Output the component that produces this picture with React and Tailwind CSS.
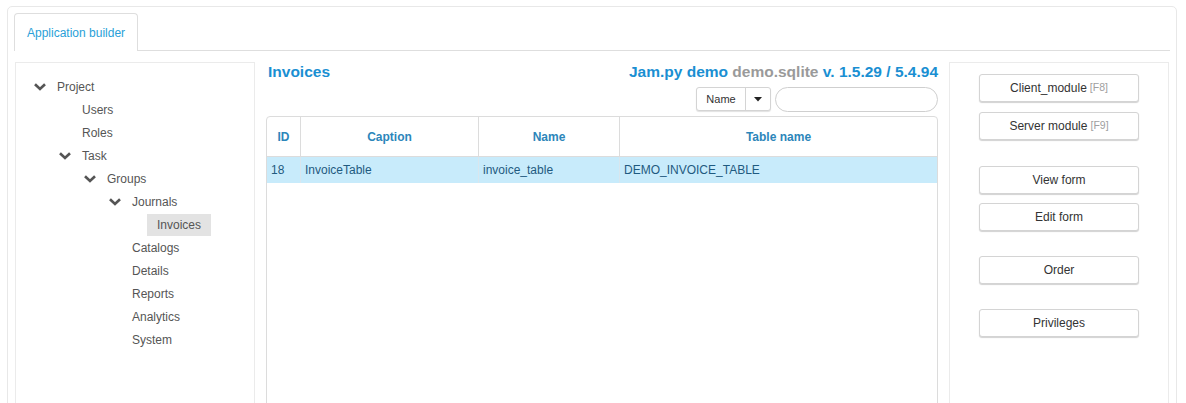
import React from "react";

const FONT = { fontFamily: '"Liberation Sans", Arial, Helvetica, sans-serif' };

function Chevron() {
  return (
    <svg width="12" height="8" viewBox="0 0 12 8" className="block">
      <path d="M1 1.2 L6 6 L11 1.2" fill="none" stroke="#555" strokeWidth="2.6" strokeLinejoin="miter" />
    </svg>
  );
}

const tree = [
  { label: "Project", level: 0, open: true },
  { label: "Users", level: 1 },
  { label: "Roles", level: 1 },
  { label: "Task", level: 1, open: true },
  { label: "Groups", level: 2, open: true },
  { label: "Journals", level: 3, open: true },
  { label: "Invoices", level: 4, selected: true },
  { label: "Catalogs", level: 3 },
  { label: "Details", level: 3 },
  { label: "Reports", level: 3 },
  { label: "Analytics", level: 3 },
  { label: "System", level: 3 },
];

const indents = ["pl-[18px]", "pl-[43px]", "pl-[68px]", "pl-[93px]", "pl-[118px]"];

function Btn({ children, hint, className = "" }) {
  return (
    <div
      className={
        "w-[160px] h-[28px] flex items-center justify-center rounded-[3px] border border-[#d4d4d4] bg-white text-[12px] text-[#333] shadow-[0_1px_1px_rgba(0,0,0,0.18)] " +
        className
      }
    >
      <span>{children}</span>
      {hint && <span className="ml-[3px] text-[10.5px] text-[#a0a0a0]">{hint}</span>}
    </div>
  );
}

export default function App() {
  return (
    <div className="w-[1186px] h-[403px] overflow-hidden bg-white" style={FONT}>
      <div className="ml-[7px] mt-[6px] w-[1170px] h-[420px] rounded-[5px] border border-[#e8e8e8] px-[6px] pt-[6px]">
        {/* tab bar */}
        <div className="flex border-b border-[#dedede] h-[38px]">
          <div className="w-[124px] h-[38px] rounded-t-[4px] border border-b-0 border-[#dedede] bg-white flex items-center pl-[12px] text-[12px] text-[#2a9fd8]">
            Application builder
          </div>
        </div>

        {/* content */}
        <div className="flex items-start mt-[11px] ml-px">
          {/* left tree panel */}
          <div className="w-[240px] h-[360px] border border-[#ebebeb] pt-[12px]">
            {tree.map((t) => (
              <div key={t.label} className={"h-[23px] flex items-center " + indents[t.level]}>
                <div className="w-[13px] flex justify-start">{t.open && <Chevron />}</div>
                <span
                  className={
                    "h-[22px] leading-[22px] px-[10px] text-[12px] text-[#555] " +
                    (t.selected ? "bg-[#e3e3e3]" : "")
                  }
                >
                  {t.label}
                </span>
              </div>
            ))}
          </div>

          {/* center */}
          <div className="w-[672px] ml-[11px]">
            <div className="h-[20px] flex items-center justify-between">
              <span className="text-[15.5px] font-bold text-[#1a8fd2] pl-[2px]">Invoices</span>
              <span className="text-[15.5px] font-bold text-[#1a8fd2]">
                Jam.py demo <span className="text-[#9a9a9a]">demo.sqlite</span> v. 1.5.29 / 5.4.94
              </span>
            </div>
            <div className="flex justify-end mt-[5px] h-[24px]">
              <div className="flex h-[24px] rounded-[3px] border border-[#d4d4d4] shadow-[0_1px_1px_rgba(0,0,0,0.12)] bg-white">
                <div className="w-[49px] flex items-center justify-center text-[11px] text-[#333] border-r border-[#d4d4d4]">
                  Name
                </div>
                <div className="w-[24px] flex items-center justify-center">
                  <svg width="8" height="5" viewBox="0 0 8 5">
                    <path d="M0 0 H8 L4 4.5 Z" fill="#222" />
                  </svg>
                </div>
              </div>
              <div className="ml-[4px] w-[163px] h-[25px] rounded-full border border-[#cfcfcf] bg-white" />
            </div>
            <div className="mt-[5px] h-[300px] rounded-t-[4px] border border-[#dcdcdc] overflow-hidden">
              <div className="flex h-[40px] border-b border-[#dcdcdc] text-[12px] font-bold text-[#2c86ba]">
                <div className="w-[34px] flex items-center justify-center border-r border-[#dcdcdc]">ID</div>
                <div className="w-[178px] flex items-center justify-center border-r border-[#dcdcdc]">Caption</div>
                <div className="w-[141px] flex items-center justify-center border-r border-[#dcdcdc]">Name</div>
                <div className="flex-1 flex items-center justify-center">Table name</div>
              </div>
              <div className="flex h-[26px] bg-[#c8ebfb] text-[12px] text-[#1f5a80]">
                <div className="w-[34px] flex items-center pl-[4px] border-r border-[#d9e6ee]">18</div>
                <div className="w-[178px] flex items-center pl-[4px] border-r border-[#d9e6ee]">InvoiceTable</div>
                <div className="w-[141px] flex items-center pl-[4px] border-r border-[#d9e6ee]">invoice_table</div>
                <div className="flex-1 flex items-center pl-[4px]">DEMO_INVOICE_TABLE</div>
              </div>
            </div>
          </div>

          {/* right panel */}
          <div className="w-[220px] h-[360px] ml-[11px] border border-[#ebebeb] pt-[11px] pl-[29px]">
            <Btn hint="[F8]">Client_module</Btn>
            <Btn hint="[F9]" className="mt-[10px]">Server module</Btn>
            <Btn className="mt-[26px]">View form</Btn>
            <Btn className="mt-[9px]">Edit form</Btn>
            <Btn className="mt-[25px]">Order</Btn>
            <Btn className="mt-[25px]">Privileges</Btn>
          </div>
        </div>
      </div>
    </div>
  );
}
